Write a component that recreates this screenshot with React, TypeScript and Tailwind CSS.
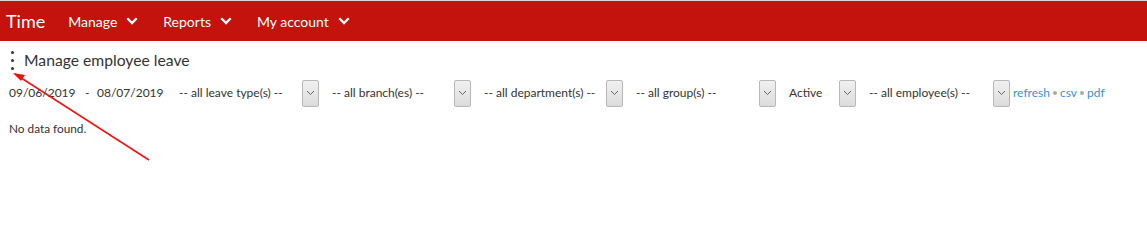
import React from "react";

function NavItem({ label }: { label: string }) {
  return (
    <div className="flex items-center gap-[9px] text-[14px] text-white">
      <span>{label}</span>
      <svg width="12" height="8" viewBox="0 0 12 8" fill="none">
        <path d="M1.3 1.3 L6 6 L10.7 1.3" stroke="white" strokeWidth="2.3" />
      </svg>
    </div>
  );
}

function Sel({ label, w }: { label: string; w: number }) {
  return (
    <div className="flex items-center" style={{ width: w }}>
      <span className="flex-1 text-[12px] text-[#333]">{label}</span>
      <div className="flex h-[27px] w-[17px] items-center justify-center rounded-[2px] border border-[#b8b8b8] bg-gradient-to-b from-[#f0f0f0] to-[#dcdcdc]">
        <svg width="9" height="6" viewBox="0 0 9 6" fill="none">
          <path d="M1 1 L4.5 4.5 L8 1" stroke="#666" strokeWidth="1" />
        </svg>
      </div>
    </div>
  );
}

export default function App() {
  return (
    <div className="relative h-[240px] w-[1147px] overflow-hidden bg-white" style={{ fontFamily: "Lato, 'Noto Sans', sans-serif" }}>
      <div className="flex h-[41px] items-center border-t border-[#d8d8d8] bg-[#c4120c] pl-[6px]">
        <span className="mr-[23px] text-[18px] text-white">Time</span>
        <div className="flex items-center gap-[25px]">
          <NavItem label="Manage" />
          <NavItem label="Reports" />
          <NavItem label="My account" />
        </div>
      </div>

      <div className="flex items-center pl-[10px] pt-[8px]">
        <div className="flex w-[14px] flex-col items-start gap-[5px] pl-[1px]">
          <span className="h-[3px] w-[3px] rounded-full bg-[#333]" />
          <span className="h-[3px] w-[3px] rounded-full bg-[#333]" />
          <span className="h-[3px] w-[3px] rounded-full bg-[#333]" />
        </div>
        <span className="text-[15.7px] text-[#333]">Manage employee leave</span>
      </div>

      <div className="mt-[7px] flex items-center pl-[9px] text-[12px] text-[#333]">
        <span className="w-[76px]">09/06/2019</span>
        <span className="w-[12px]">-</span>
        <span className="w-[82px]">08/07/2019</span>
        <div className="flex items-center gap-[13px]">
          <Sel label="-- all leave type(s) --" w={140} />
          <Sel label="-- all branch(es) --" w={139} />
          <Sel label="-- all department(s) --" w={139} />
          <Sel label="-- all group(s) --" w={140} />
          <Sel label="Active" w={67} />
          <Sel label="-- all employee(s) --" w={141} />
        </div>
        <div className="ml-[3px] flex items-center gap-[3px] text-[12px] text-[#3b8fe6]">
          <span>refresh</span>
          <span className="h-[4px] w-[4px] rounded-full bg-[#aaa]" />
          <span>csv</span>
          <span className="h-[4px] w-[4px] rounded-full bg-[#aaa]" />
          <span>pdf</span>
        </div>
      </div>

      <div className="mt-[13px] pl-[9px] text-[11.8px] text-[#333]">No data found.</div>

      <svg className="absolute left-0 top-0" width="1147" height="240" viewBox="0 0 1147 240" fill="none">
        <line x1="149" y1="160" x2="15" y2="74" stroke="#f01010" strokeWidth="1.5" />
        <path d="M13 73 L25 75 L21 81 Z" fill="#f01010" />
      </svg>
    </div>
  );
}
